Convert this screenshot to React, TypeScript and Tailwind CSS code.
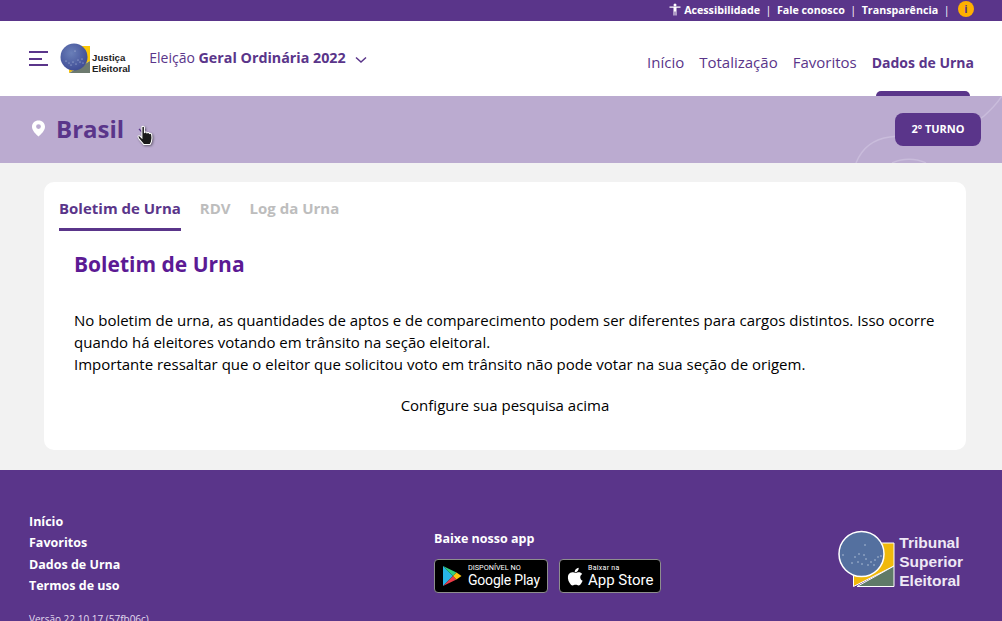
import React from "react";

const Globe = ({ id, color }: { id: string; color: string }) => (
  <>
    <defs>
      <radialGradient id={id} cx="40%" cy="35%" r="70%">
        <stop offset="0%" stopColor="#6a7fb8" />
        <stop offset="100%" stopColor={color} />
      </radialGradient>
    </defs>
    <circle cx="14" cy="14" r="13.5" fill={`url(#${id})`} />
    {[[15, 8], [9, 20], [13, 19], [18, 17], [20, 19], [22, 16], [6, 18], [16, 21], [23, 20], [11, 22]].map(([x, y], i) => (
      <circle key={i} cx={x} cy={y} r="0.5" fill="#d7dff2" />
    ))}
  </>
);

const JeLogo = () => (
  <svg width="31" height="31" viewBox="0 0 31 31" className="shrink-0">
    <path d="M9 3H30V18L9 30Z" fill="#fbc707" />
    <path d="M9 30L30 18V30Z" fill="#6d7a6f" />
    <Globe id="je" color="#3d4a94" />
  </svg>
);

const TseLogo = () => (
  <svg width="58" height="58" viewBox="0 0 58 58" className="shrink-0">
    <path d="M15.5 13H56V36L15.5 56.5Z" fill="#f0b90b" stroke="#fff" strokeWidth="1" />
    <path d="M19 56.5L56 36V56.5Z" fill="#5f7a68" stroke="#fff" strokeWidth="1" />
    <circle cx="23.5" cy="24" r="22.5" fill="#54709f" stroke="#fff" strokeWidth="1.5" />
    {[[27, 15], [5, 25], [21, 24], [26, 25], [28, 29], [33, 32], [37, 30], [40, 27], [43, 26], [14, 33], [20, 32], [30, 35], [36, 35], [24, 34], [17, 27]].map(([x, y], i) => (
      <circle key={i} cx={x} cy={y} r="0.7" fill="#c8d4e6" />
    ))}
  </svg>
);

const PlayIcon = () => (
  <svg width="20" height="22" viewBox="0 0 20 22" className="shrink-0">
    <path d="M1 1V21L11 11Z" fill="#27b5e8" />
    <path d="M1 1L11 11L14.5 7.5Z" fill="#31d07f" />
    <path d="M1 21L11 11L14.5 14.5Z" fill="#ec3b48" />
    <path d="M14.5 7.5L19.5 11L14.5 14.5L11 11Z" fill="#fdc60f" />
  </svg>
);

const AppleIcon = () => (
  <svg width="16" height="19" viewBox="0 0 24 28" className="shrink-0" fill="#fff">
    <path d="M17.5 1c.2 2-.6 3.6-1.6 4.8-1.1 1.3-2.7 2.2-4.3 2.1-.2-1.9.7-3.6 1.6-4.7C14.300 2 16 1.100 17.500 1z" />
    <path d="M23.500 20.500c-.6 1.400-.9 2-1.700 3.200-1.100 1.700-2.600 3.800-4.500 3.800-1.700 0-2.100-1.100-4.400-1.100s-2.800 1.100-4.500 1.100c-1.900 0-3.300-1.900-4.400-3.600C1 19.400.6 13.800 2.500 10.800c1.400-2.100 3.500-3.300 5.500-3.300s3.300 1.100 5 1.100c1.600 0 2.600-1.100 4.900-1.100 1.700 0 3.600.9 4.900 2.600-4.300 2.400-3.600 8.500.7 10.400z" />
  </svg>
);

const HandCursor = () => (
  <div className="absolute left-[136px] top-[29px] h-[23px] w-[21px]">
    <svg width="8" height="6" viewBox="0 0 8 6" fill="none" stroke="#5a358a" strokeWidth="1.3" className="absolute left-[2px] top-[3px]">
      <path d="M1 1L4 4L7 1" />
    </svg>
    <svg width="21" height="23" viewBox="0 0 18 20" className="absolute left-0 top-0 drop-shadow-[1px_1px_1px_rgba(0,0,0,0.45)]">
      <path
        d="M5 2c0-1.300 2.200-1.300 2.200 0v5l.3-.6c.7-.6 1.800-.4 2 .5.700-.6 1.800-.3 2 .5.800-.4 1.800 0 2 1 .4 2 .3 4.500-.2 6.100-.3 1-.8 1.700-1.300 2.500H6.500C5.500 15.500 3.800 14 2.800 12.500 2 11.300 1.300 10.300 1.600 9.800c.4-.7 1.500-.4 2.200.3L5 11.300Z"
        fill="#1a1a1a"
        stroke="#fff"
        strokeWidth="0.9"
      />
    </svg>
  </div>
);

const navItems = ["Início", "Totalização", "Favoritos"];
const footerLinks = ["Início", "Favoritos", "Dados de Urna", "Termos de uso"];

export default function App() {
  return (
    <div className="flex h-[621px] flex-col overflow-hidden bg-[#f2f2f2] font-['Open_Sans',sans-serif] text-black">
      <div className="flex h-[21px] shrink-0 items-center justify-end gap-[5.500px] bg-[#5a358a] pr-[28px] text-[10.700px] font-bold text-white">
        <svg width="12" height="13" viewBox="0 0 12 13" fill="#fff" className="mb-[3px] mr-[-2px]">
          <circle cx="6" cy="2" r="1.500" />
          <path d="M0.500 3.500H11.500V4.700H7.500V12.500H6.500V8.500H5.500V12.500H4.500V4.700H0.500Z" />
        </svg>
        <span>Acessibilidade</span>
        <span className="font-normal">|</span>
        <span>Fale conosco</span>
        <span className="font-normal">|</span>
        <span>Transparência</span>
        <span className="font-normal">|</span>
        <span className="mb-[3px] ml-[3px] flex h-4 w-4 items-center justify-center rounded-full bg-[#ffb000] text-[11px] font-bold text-[#5a358a]">i</span>
      </div>

      <header className="relative flex h-[75px] shrink-0 items-center bg-white pl-[29px] pr-[28px]">
        <div className="flex w-[19px] flex-col gap-[4.500px]">
          <span className="h-[2px] w-[19px] bg-[#5a358a]" />
          <span className="h-[2px] w-[13px] bg-[#5a358a]" />
          <span className="h-[2px] w-[19px] bg-[#5a358a]" />
        </div>
        <div className="ml-[12px] flex items-end">
          <JeLogo />
          <div className="ml-[1px] font-['Liberation_Sans',sans-serif] text-[9.700px] leading-[11px] font-bold text-[#222]">
            Justiça
            <br />
            Eleitoral
          </div>
        </div>
        <div className="ml-[19px] text-sm text-[#5a358a]">
          Eleição <span className="text-[14.300px] font-bold">Geral Ordinária 2022</span>
        </div>
        <svg width="12" height="8" viewBox="0 0 12 8" fill="none" stroke="#5a358a" strokeWidth="1.500" className="ml-[9px] mt-[3px]">
          <path d="M1 1.500L6 6L11 1.500" />
        </svg>
        <nav className="ml-auto mt-[7px] flex items-baseline gap-[15px] text-[15px] text-[#5a358a]">
          {navItems.map((item) => (
            <span key={item}>{item}</span>
          ))}
          <span className="text-sm font-bold">Dados de Urna</span>
        </nav>
        <div className="absolute bottom-0 right-[32px] h-[5px] w-[94px] rounded-t-[5px] bg-[#5a358a]" />
      </header>

      <section className="relative flex h-[67px] shrink-0 items-center overflow-hidden bg-[#bbabd0] pl-[31px] pr-[21px]">
        <svg width="15" height="17" viewBox="0 0 15 17" className="mb-[2px]">
          <path fillRule="evenodd" d="M7.500 0.500C3.700 0.500 1 3.200 1 6.700c0 3.800 3.700 7.300 6.500 9.800 2.800-2.500 6.500-6 6.500-9.800C14 3.200 11.300.5 7.500.5zM7.500 9a2.400 2.400 0 1 1 0-4.800 2.400 2.400 0 0 1 0 4.800z" fill="#fff" />
        </svg>
        <h1 className="mb-[2px] ml-[10px] text-2xl leading-none font-bold text-[#5a358a]">Brasil</h1>
        <HandCursor />
        <svg width="300" height="67" viewBox="0 0 300 67" fill="none" stroke="#c9bcdb" strokeWidth="1.500" className="absolute right-0 top-0">
          <path d="M154 67C160 52 172 43 188 41C214 38 262 36 282 20C291 12 296 6 300 0" />
          <path d="M190 67C200 62 214 62 224 67" />
        </svg>
        <button className="relative ml-auto h-[33px] w-[86px] rounded-[8px] bg-[#5a358a] text-[11px] font-bold text-white">2º TURNO</button>
      </section>

      <main className="h-[307px] shrink-0 pl-[44px] pr-[36px] pt-[19px]">
        <div className="h-[268px] rounded-[10px] bg-white pl-[15px] pr-[30px]">
          <div className="flex h-[49px] gap-[19px] text-[15px] font-bold text-[#bdbdbd]">
            <span className="flex h-[49px] items-center border-b-[3px] border-[#5a358a] pt-[7px] text-[#5a358a]">Boletim de Urna</span>
            <span className="flex h-[49px] items-center pt-[3px]">RDV</span>
            <span className="flex h-[49px] items-center pt-[3px]">Log da Urna</span>
          </div>
          <div className="pl-[15px]">
            <h2 className="mt-[18px] text-[21px] leading-[30px] font-bold text-[#5c1a94]">Boletim de Urna</h2>
            <p className="mt-[30px] text-[15px] leading-[22px]">
              No boletim de urna, as quantidades de aptos e de comparecimento podem ser diferentes para cargos distintos. Isso ocorre quando há eleitores votando em trânsito na seção eleitoral.
              <br />
              Importante ressaltar que o eleitor que solicitou voto em trânsito não pode votar na sua seção de origem.
            </p>
            <p className="mt-[19px] text-center text-[15px] leading-[22px]">Configure sua pesquisa acima</p>
          </div>
        </div>
      </main>

      <footer className="relative flex h-[151px] shrink-0 bg-[#5a358a] pl-[29px] pr-[39px] text-white">
        <div className="w-[405px] pt-[41px]">
          <ul className="flex flex-col text-[12.500px] leading-[21.400px] font-bold">
            {footerLinks.map((link) => (
              <li key={link}>{link}</li>
            ))}
          </ul>
          <div className="mt-[15px] text-[10px] leading-[14px] text-[#e4dcef]">Versão 22.10.17 (57fb06c)</div>
        </div>
        <div className="pt-[60px]">
          <div className="text-[12.500px] leading-[18px] font-bold">Baixe nosso app</div>
          <div className="mt-[11px] flex gap-[11px]">
            <div className="flex h-[34px] w-[114px] items-center rounded-[4px] border border-[#8e8e8e] bg-black pl-[7px] font-['Roboto',sans-serif]">
              <PlayIcon />
              <div className="ml-[6px] flex flex-col">
                <span className="text-[7.300px] leading-[8px]">DISPONÍVEL NO</span>
                <span className="text-[14px] leading-[16px] tracking-[-0.2px]">Google Play</span>
              </div>
            </div>
            <div className="flex h-[34px] w-[102px] items-center rounded-[4px] border border-[#8e8e8e] bg-black pl-[7px] font-['Roboto',sans-serif]">
              <AppleIcon />
              <div className="ml-[5px] flex flex-col">
                <span className="text-[7px] leading-[8px] tracking-[0.3px]">Baixar na</span>
                <span className="text-[15px] leading-[16px]">App Store</span>
              </div>
            </div>
          </div>
        </div>
        <div className="ml-auto flex pt-[60px]">
          <TseLogo />
          <div className="ml-[3px] pt-[3px] font-['Liberation_Sans',sans-serif] text-[15.500px] leading-[19px] font-bold text-[#eee8f5]">
            Tribunal
            <br />
            Superior
            <br />
            Eleitoral
          </div>
        </div>
      </footer>
    </div>
  );
}
